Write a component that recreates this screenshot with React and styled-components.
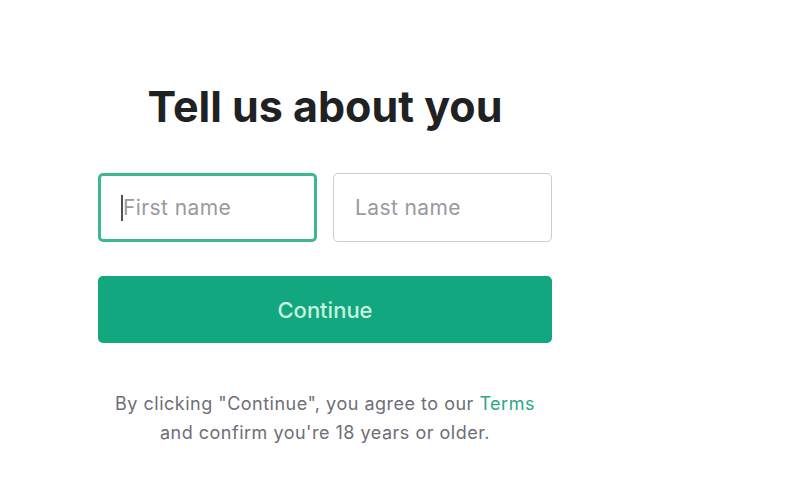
import React from "react";
import styled, { createGlobalStyle } from "styled-components";

const Global = createGlobalStyle`
  html, body { margin: 0; padding: 0; background: #ffffff; }
  body { font-family: Inter, "Noto Sans", sans-serif; }
`;

const Page = styled.div`
  width: 800px;
  height: 497px;
  box-sizing: border-box;
  padding: 81px 0 0 98px;
`;

const Form = styled.div`
  width: 454px;
  display: flex;
  flex-direction: column;
  align-items: stretch;
`;

const Title = styled.h1`
  margin: 0 0 42px;
  text-align: center;
  font-size: 43px;
  line-height: 50px;
  font-weight: 700;
  color: #202123;
  letter-spacing: 0;
`;

const Row = styled.div`
  display: grid;
  grid-template-columns: 1fr 1fr;
  gap: 16px;
`;

const Field = styled.div`
  height: 69px;
  box-sizing: border-box;
  border-radius: 5px;
  border: ${(p) => (p.$active ? "3px solid #3db792" : "1px solid #c9ccd1")};
  display: flex;
  align-items: center;
  padding-left: ${(p) => (p.$active ? "20px" : "21px")};
  font-size: 21px;
  letter-spacing: 0.4px;
  color: #9a9aa0;
`;

const Caret = styled.span`
  width: 2px;
  height: 26px;
  background: #505055;
  margin-right: 0;
`;

const Button = styled.button`
  margin-top: 34px;
  height: 67px;
  border: none;
  border-radius: 5px;
  background: #12a77e;
  color: #c8f3de;
  font-family: Inter, "Noto Sans", sans-serif;
  font-size: 22px;
  font-weight: 500;
`;

const Note = styled.p`
  margin: 46px 0 0;
  text-align: center;
  font-size: 18px;
  letter-spacing: 0.5px;
  line-height: 29px;
  color: #6e6e78;
`;

const Link = styled.span`
  color: #2ea882;
`;

export default function App() {
  return (
    <>
      <Global />
      <Page>
        <Form>
          <Title>Tell us about you</Title>
          <Row>
            <Field $active>
              <Caret />
              First name
            </Field>
            <Field>Last name</Field>
          </Row>
          <Button>Continue</Button>
          <Note>
            By clicking "Continue", you agree to our <Link>Terms</Link>
            <br />
            and confirm you're 18 years or older.
          </Note>
        </Form>
      </Page>
    </>
  );
}
